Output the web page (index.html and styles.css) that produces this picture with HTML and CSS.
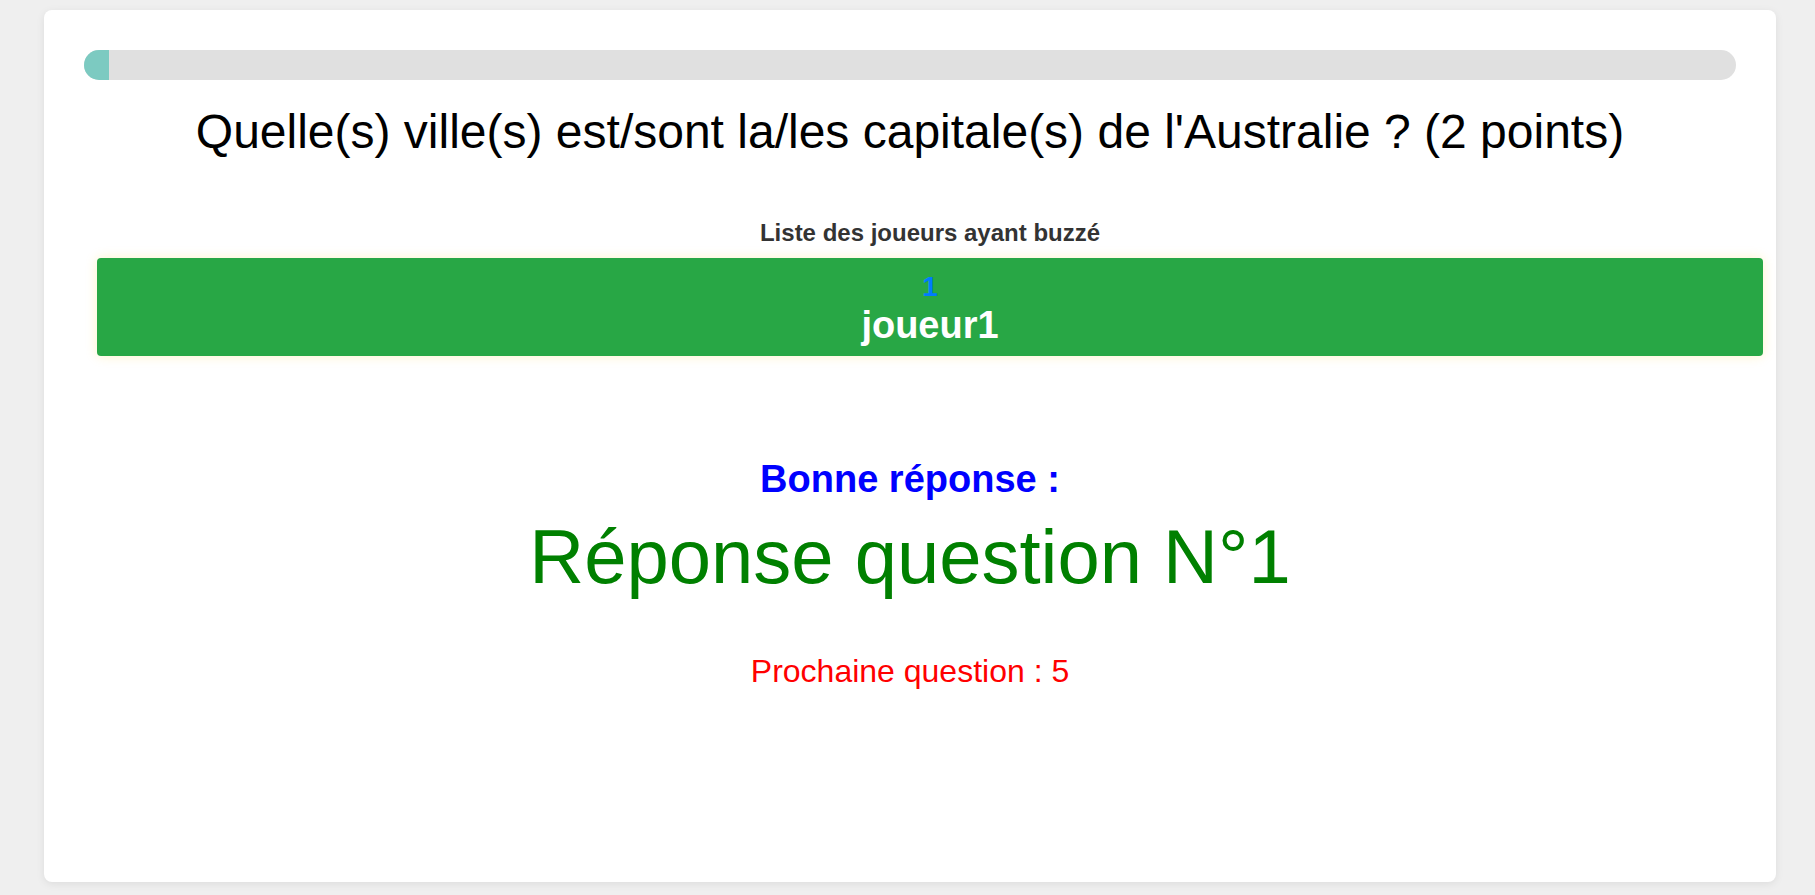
FILE: index.html
```html
<!DOCTYPE html>
<html lang="fr">
<head>
<meta charset="utf-8">
<title>Quiz</title>
<link rel="stylesheet" href="styles.css">
</head>
<body>
<main class="card">
  <div class="progress"><div class="progress-fill" style="width: 25px"></div></div>
  <h1 class="question">Quelle(s) ville(s) est/sont la/les capitale(s) de l'Australie ? (2 points)</h1>
  <section class="buzz">
    <h2 class="buzz-title">Liste des joueurs ayant buzzé</h2>
    <div class="buzz-item">
      <div class="buzz-rank">1</div>
      <div class="buzz-name">joueur1</div>
    </div>
  </section>
  <section class="answer">
    <div class="answer-label">Bonne réponse :</div>
    <div class="answer-text">Réponse question N°1</div>
    <div class="next">Prochaine question : 5</div>
  </section>
</main>
</body>
</html>
```

FILE: styles.css
```css
html, body {
  margin: 0;
  padding: 0;
}
body {
  background: #efefef;
  font-family: "Liberation Sans", Arial, sans-serif;
  padding: 10px 39px 13px 44px;
}
.card {
  box-sizing: border-box;
  width: 1732px;
  height: 872px;
  background: #fff;
  border-radius: 8px;
  box-shadow: 0 2px 8px rgba(0, 0, 0, 0.08);
  padding: 40px;
}
.progress {
  height: 30px;
  background: #e0e0e0;
  border-radius: 15px;
  overflow: hidden;
}
.progress-fill {
  height: 100%;
  background: #7ccac1;
}
.question {
  margin: 24px 0 0;
  font-size: 48px;
  line-height: 56px;
  font-weight: normal;
  text-align: center;
  color: #000;
}
.buzz {
  margin: 59px -27px 0 13px;
}
.buzz-title {
  margin: 0 0 10.6px;
  font-size: 24px;
  line-height: 28px;
  font-weight: bold;
  color: #333;
  text-align: center;
}
.buzz-item {
  background: #28a745;
  border-radius: 4px;
  box-shadow: 0 0 12px rgba(255, 204, 0, 0.22);
  padding: 13px 0 9.5px;
  text-align: center;
  font-weight: bold;
}
.buzz-rank {
  font-size: 28px;
  line-height: 32px;
  color: #007bff;
  margin-bottom: 1.5px;
}
.buzz-name {
  font-size: 38px;
  line-height: 42px;
  color: #fff;
}
.answer {
  text-align: center;
  margin-top: 101.8px;
}
.answer-label {
  font-size: 38px;
  line-height: 44px;
  font-weight: bold;
  color: #0000ff;
}
.answer-text {
  margin-top: 11.9px;
  font-size: 76px;
  line-height: 88px;
  color: #008000;
}
.next {
  margin-top: 50.6px;
  font-size: 32px;
  line-height: 38px;
  color: #ff0000;
}
```
